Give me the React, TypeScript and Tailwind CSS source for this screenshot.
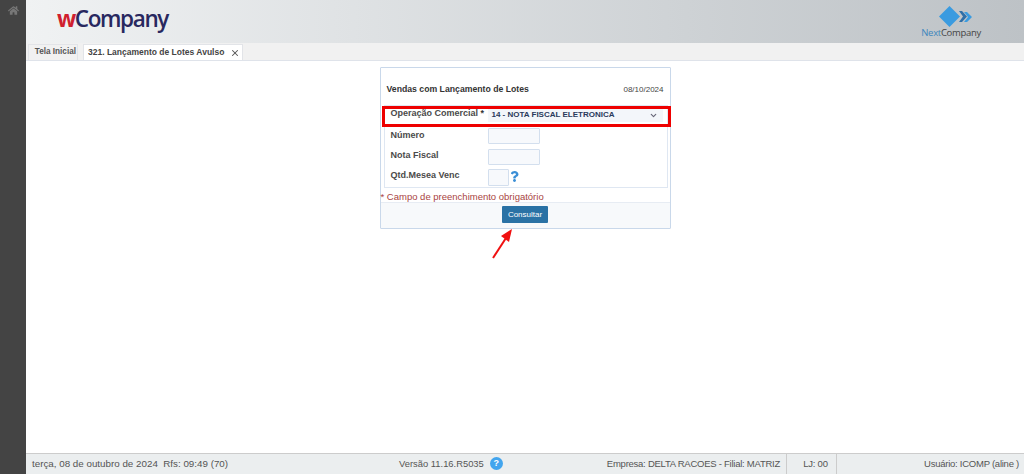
import { FaHome, FaQuestion } from "react-icons/fa";
import { FiX, FiChevronDown } from "react-icons/fi";

const labelClass = "w-[97px] shrink-0 whitespace-nowrap text-[9px] font-bold text-[#4a4a4a]";
const inputClass = "rounded-[1px] border border-[#d3dfee] bg-[#f7f9fc]";

const App = () => {
  return (
    <div className="flex h-[474px] w-[1024px] overflow-hidden bg-white font-['Liberation_Sans',Arial,sans-serif]">
      <aside className="flex w-[26px] shrink-0 justify-center bg-[#444444] pt-[5px]">
        <FaHome size={11} className="text-[#777]" />
      </aside>

      <div className="flex min-w-0 flex-1 flex-col">
        <header className="flex h-[43px] shrink-0 items-center justify-between bg-gradient-to-r from-[#f0f2f3] to-[#bdc2c6] pl-[31px] pr-[43px]">
          <div className="mb-[4px] font-['Open_Sans',sans-serif] text-[22.5px] leading-none font-semibold tracking-[-1.4px] text-[#28285f]">
            <span className="font-bold text-[#d0202e]">w</span>Company
          </div>
          <div className="flex flex-col items-center">
            <svg width="48" height="22" viewBox="0 0 48 22">
              <path d="M22.5 1 L33 11.5 L22.5 22 L12 11.5 Z" fill="#3a9be0" />
              <path d="M32 6 L35 6 L40 11.5 L35 17 L32 17 L36 11.5 Z" fill="#2f6fa8" />
              <path d="M37 7 L40 7 L45 12 L40 17 L37 17 L41 12 Z" fill="#3a9be0" />
            </svg>
            <div className="font-['Open_Sans',sans-serif] text-[9.5px] leading-[12px] tracking-[-0.3px] text-[#444]">
              <span className="text-[#3f86bd]">Next</span>Company
            </div>
          </div>
        </header>

        <nav className="flex h-[18px] shrink-0 items-end border-b border-[#dfe3ea] bg-[#f1f1f1] pl-[2px]">
          <div className="flex h-[16px] w-[50px] items-center justify-end border border-b-0 border-[#e2e4e8] pr-[1px] text-[8.2px] font-bold whitespace-nowrap text-[#555]">
            Tela Inicial
          </div>
          <div className="ml-[5px] flex h-[16px] w-[160px] items-center justify-between border border-b-0 border-[#e2e4e8] bg-white pl-[4px] pr-[2px] text-[8.5px] font-bold whitespace-nowrap text-[#444]">
            <span>321. Lançamento de Lotes Avulso</span>
            <FiX size={10} strokeWidth={2.5} className="shrink-0 text-[#555]" />
          </div>
        </nav>

        <main className="relative flex min-h-0 flex-1 justify-center bg-white pt-[6px]">
          <section className="flex h-[162px] w-[291px] flex-col rounded-[1px] border border-[#c9d8ea]">
            <div className="flex h-[37px] shrink-0 items-center justify-between pl-[6px] pr-[6px] pt-[6px]">
              <span className="text-[8.7px] font-bold whitespace-nowrap text-[#333]">Vendas com Lançamento de Lotes</span>
              <span className="text-[8px] text-[#444]">08/10/2024</span>
            </div>

            <div className="ml-[3px] mr-[2px] flex h-[83px] shrink-0 flex-col border border-[#dfe7f2] pl-[6px]">
              <div className="mt-[2px] flex h-[14px] items-center">
                <span className={`${labelClass} mb-[2px]`}>
                  Operação Comercial <span className="text-[#333]">*</span>
                </span>
                <div className="flex h-[14px] w-[175px] items-center justify-between bg-[#f3f6fa] pl-[4px] pr-[5px]">
                  <span className="text-[8px] font-bold whitespace-nowrap text-[#2a3a5c]">14 - NOTA FISCAL ELETRONICA</span>
                  <FiChevronDown size={9} strokeWidth={3} className="text-[#667]" />
                </div>
              </div>
              <div className="mt-[6px] flex h-[16px] items-center">
                <span className={`${labelClass} mb-[1px]`}>Número</span>
                <div className={`${inputClass} h-[16px] w-[52px]`} />
              </div>
              <div className="mt-[5px] flex h-[16px] items-center">
                <span className={`${labelClass} mb-[3px]`}>Nota Fiscal</span>
                <div className={`${inputClass} h-[16px] w-[52px]`} />
              </div>
              <div className="mt-[4px] flex h-[17px] items-center">
                <span className={`${labelClass} mb-[4px]`}>Qtd.Mesea Venc</span>
                <div className={`${inputClass} h-[17px] w-[21px]`} />
                <FaQuestion size={11} className="mb-[3px] text-[#3b8fd6]" />
              </div>
            </div>

            <p className="mt-[3px] h-[11px] shrink-0 text-[9.5px] leading-[11px] whitespace-nowrap text-[#a94442]">
              * Campo de preenchimento obrigatório
            </p>
            <div className="flex flex-1 justify-center border-t border-[#e7ecf3] bg-[#f7f9fb] pt-[3px]">
              <button className="h-[17px] w-[46px] rounded-[1px] bg-[#2a72a5] text-[8px] text-white">
                Consultar
              </button>
            </div>
          </section>

          {/* annotations drawn over the form */}
          <div className="absolute left-[356px] top-[45px] h-[21px] w-[289px] border-[3px] border-[#ee0000]" />
          <svg className="absolute left-[462px] top-[167px]" width="30" height="32" viewBox="0 0 30 32">
            <path d="M5 30 L18 10" stroke="#f01010" strokeWidth="2" />
            <path d="M24 1 L13 8 L21 14 Z" fill="#f01010" />
          </svg>
        </main>

        <footer className="flex h-[21px] shrink-0 items-center border-t border-[#cccccc] bg-[#ebeeef] text-[9.5px] tracking-[-0.25px] text-[#555]">
          <span className="w-[373px] shrink-0 pl-[6px] text-[9.8px] tracking-normal whitespace-nowrap">terça, 08 de outubro de 2024 &nbsp;Rfs: 09:49 (70)</span>
          <span className="flex w-[110px] shrink-0 items-center gap-[6px] text-[9.4px] tracking-normal whitespace-nowrap">
            Versão 11.16.R5035
            <span className="flex h-[13px] w-[13px] items-center justify-center rounded-full bg-[#42a5ee] text-[9px] font-bold text-white">?</span>
          </span>
          <span className="flex h-full w-[278px] shrink-0 items-center justify-end border-r border-[#cccccc] pr-[6px] whitespace-nowrap">
            Empresa: DELTA RACOES - Filial: MATRIZ
          </span>
          <span className="flex h-full w-[50px] shrink-0 items-center justify-center border-r border-[#cccccc] pl-[8px]">LJ: 00</span>
          <span className="flex-1 pr-[5px] text-right whitespace-nowrap">Usuário: ICOMP (aline )</span>
        </footer>
      </div>
    </div>
  );
};

export default App;
